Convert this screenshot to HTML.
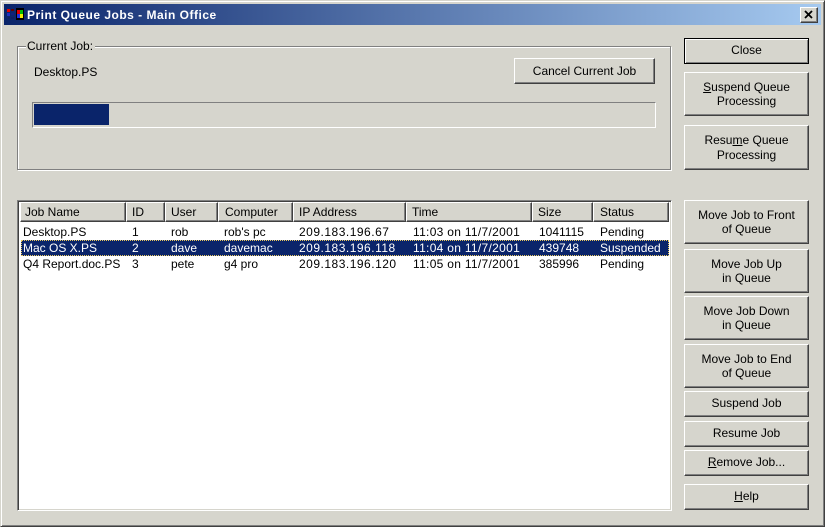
<!DOCTYPE html>
<html><head><meta charset="utf-8"><style>
*{box-sizing:border-box}
html,body{margin:0;padding:0;width:825px;height:527px;overflow:hidden;background:#d6d5cd}
body{position:relative;font:12px/14px "Liberation Sans",sans-serif;color:#000}
.a{position:absolute;white-space:nowrap}
.win{position:absolute;left:0;top:0;width:825px;height:527px;border:1px solid;border-color:#d6d5cd #404040 #404040 #d6d5cd;box-shadow:inset 1px 1px 0 #fff,inset -1px -1px 0 #808080}
.title{position:absolute;left:4px;top:4px;width:817px;height:21px;background:linear-gradient(90deg,#0a246a,#a6caf0)}
.ttl{left:27px;top:8px;color:#fff;font-weight:bold;font-size:12px;letter-spacing:.5px}
.btn{position:absolute;left:684px;width:125px;background:#d6d5cd;border-top:1px solid #fff;border-left:1px solid #fff;border-right:1px solid #404040;border-bottom:1px solid #404040;box-shadow:inset -1px -1px 0 #808080;text-align:center;display:flex;align-items:center;justify-content:center;line-height:15px;padding-bottom:2px}
.two{padding-bottom:0;line-height:14.5px}
.group{position:absolute;left:17px;top:46px;width:654px;height:124px;border:1px solid #808080;box-shadow:inset 1px 1px 0 #fff,1px 1px 0 #fff}
.legend{left:26px;top:39px;background:#d6d5cd;padding:0 2px 0 1px}
.prog{position:absolute;left:32px;top:102px;width:624px;height:26px;border:1px solid;border-color:#808080 #fff #fff #808080}
.fill{position:absolute;left:34px;top:104px;width:75px;height:21px;background:#0a246a}
.list{position:absolute;left:17px;top:200px;width:655px;height:311px;background:#fff;border:1px solid;border-color:#808080 #fff #fff #808080;box-shadow:inset 1px 1px 0 #404040,inset -1px -1px 0 #d6d5cd}
.h{position:absolute;top:202px;height:20px;background:#d6d5cd;border-top:1px solid #fff;border-left:1px solid #fff;border-right:1px solid #404040;border-bottom:1px solid #404040;box-shadow:inset -1px -1px 0 #808080;padding-left:5px;line-height:18px}
.sel{position:absolute;left:21px;top:240px;width:648px;height:16px;background:#0a246a;outline:1px dotted #e8c860;outline-offset:-1px}
.w{color:#fff}
.ip{letter-spacing:.5px}
.tm{letter-spacing:.3px}
u{text-decoration:underline}
</style></head><body>
<div class="win"></div>
<div class="title"></div>
<svg class="a" style="left:7px;top:7px" width="17" height="15" viewBox="0 0 17 15">
<rect x="0" y="2" width="3" height="3" fill="#e00000"/><rect x="4" y="2" width="3" height="2" fill="#600000"/><rect x="0" y="6" width="3" height="3" fill="#2030c0"/><rect x="4" y="6" width="3" height="2" fill="#102080"/><rect x="1" y="10" width="2" height="2" fill="#102060"/><rect x="4" y="10" width="3" height="2" fill="#102060"/>
<rect x="9" y="1" width="8" height="12" fill="#000"/><rect x="10" y="3" width="3" height="4" fill="#e00000"/><rect x="13" y="3" width="3" height="4" fill="#00c000"/><rect x="10" y="7" width="3" height="4" fill="#2030e0"/><rect x="13" y="7" width="3" height="4" fill="#f0f000"/>
</svg>
<div class="a ttl">Print Queue Jobs - Main Office</div>
<div class="a" style="left:800px;top:7px;width:18px;height:16px;background:#d6d5cd;border:1px solid;border-color:#fff #404040 #404040 #fff;box-shadow:inset -1px -1px 0 #808080"></div>
<svg class="a" style="left:804px;top:10px" width="10" height="10" viewBox="0 0 10 10"><path d="M1 1L8 8M8 1L1 8" stroke="#000" stroke-width="1.8"/></svg>

<div class="group"></div>
<div class="a legend">Current Job:</div>
<div class="a" style="left:34px;top:65px">Desktop.PS</div>
<div class="prog"></div><div class="fill"></div>
<div class="btn" style="left:514px;top:58px;width:141px;height:26px;padding-bottom:0">Cancel Current Job</div>

<div class="btn" style="top:38px;height:26px;border:1px solid #000;box-shadow:inset 1px 1px 0 #fff,inset -1px -1px 0 #808080,inset -2px -2px 0 #d6d5cd">Close</div>
<div class="btn two" style="top:72px;height:44px"><span><u>S</u>uspend Queue<br>Processing</span></div>
<div class="btn two" style="top:125px;height:45px"><span>Resu<u>m</u>e Queue<br>Processing</span></div>
<div class="btn two" style="top:200px;height:44px"><span>Move Job to Front<br>of Queue</span></div>
<div class="btn two" style="top:249px;height:44px"><span>Move Job Up<br>in Queue</span></div>
<div class="btn two" style="top:296px;height:44px"><span>Move Job Down<br>in Queue</span></div>
<div class="btn two" style="top:344px;height:44px"><span>Move Job to End<br>of Queue</span></div>
<div class="btn" style="top:391px;height:26px">Suspend Job</div>
<div class="btn" style="top:421px;height:26px">Resume Job</div>
<div class="btn" style="top:450px;height:26px"><span><u>R</u>emove Job...</span></div>
<div class="btn" style="top:484px;height:26px"><span><u>H</u>elp</span></div>

<div class="list"></div>
<div class="h" style="left:20px;width:106px;padding-left:4px">Job Name</div>
<div class="h" style="left:126px;width:39px">ID</div>
<div class="h" style="left:165px;width:53px">User</div>
<div class="h" style="left:218px;width:75px;padding-left:6px">Computer</div>
<div class="h" style="left:293px;width:113px">IP Address</div>
<div class="h" style="left:406px;width:126px">Time</div>
<div class="h" style="left:532px;width:61px;padding-left:5px">Size</div>
<div class="h" style="left:593px;width:76px;padding-left:6px">Status</div>

<div class="a" style="left:23px;top:225px">Desktop.PS</div>
<div class="a" style="left:132px;top:225px">1</div>
<div class="a" style="left:171px;top:225px">rob</div>
<div class="a" style="left:224px;top:225px">rob's pc</div>
<div class="a ip" style="left:299px;top:225px">209.183.196.67</div>
<div class="a tm" style="left:413px;top:225px">11:03 on 11/7/2001</div>
<div class="a" style="left:539px;top:225px">1041115</div>
<div class="a" style="left:600px;top:225px">Pending</div>

<div class="sel"></div>
<div class="a w" style="left:23px;top:241px">Mac OS X.PS</div>
<div class="a w" style="left:132px;top:241px">2</div>
<div class="a w" style="left:171px;top:241px">dave</div>
<div class="a w" style="left:224px;top:241px">davemac</div>
<div class="a w ip" style="left:299px;top:241px">209.183.196.118</div>
<div class="a w tm" style="left:413px;top:241px">11:04 on 11/7/2001</div>
<div class="a w" style="left:539px;top:241px">439748</div>
<div class="a w" style="left:600px;top:241px">Suspended</div>

<div class="a" style="left:23px;top:257px">Q4 Report.doc.PS</div>
<div class="a" style="left:132px;top:257px">3</div>
<div class="a" style="left:171px;top:257px">pete</div>
<div class="a" style="left:224px;top:257px">g4 pro</div>
<div class="a ip" style="left:299px;top:257px">209.183.196.120</div>
<div class="a tm" style="left:413px;top:257px">11:05 on 11/7/2001</div>
<div class="a" style="left:539px;top:257px">385996</div>
<div class="a" style="left:600px;top:257px">Pending</div>
</body></html>
